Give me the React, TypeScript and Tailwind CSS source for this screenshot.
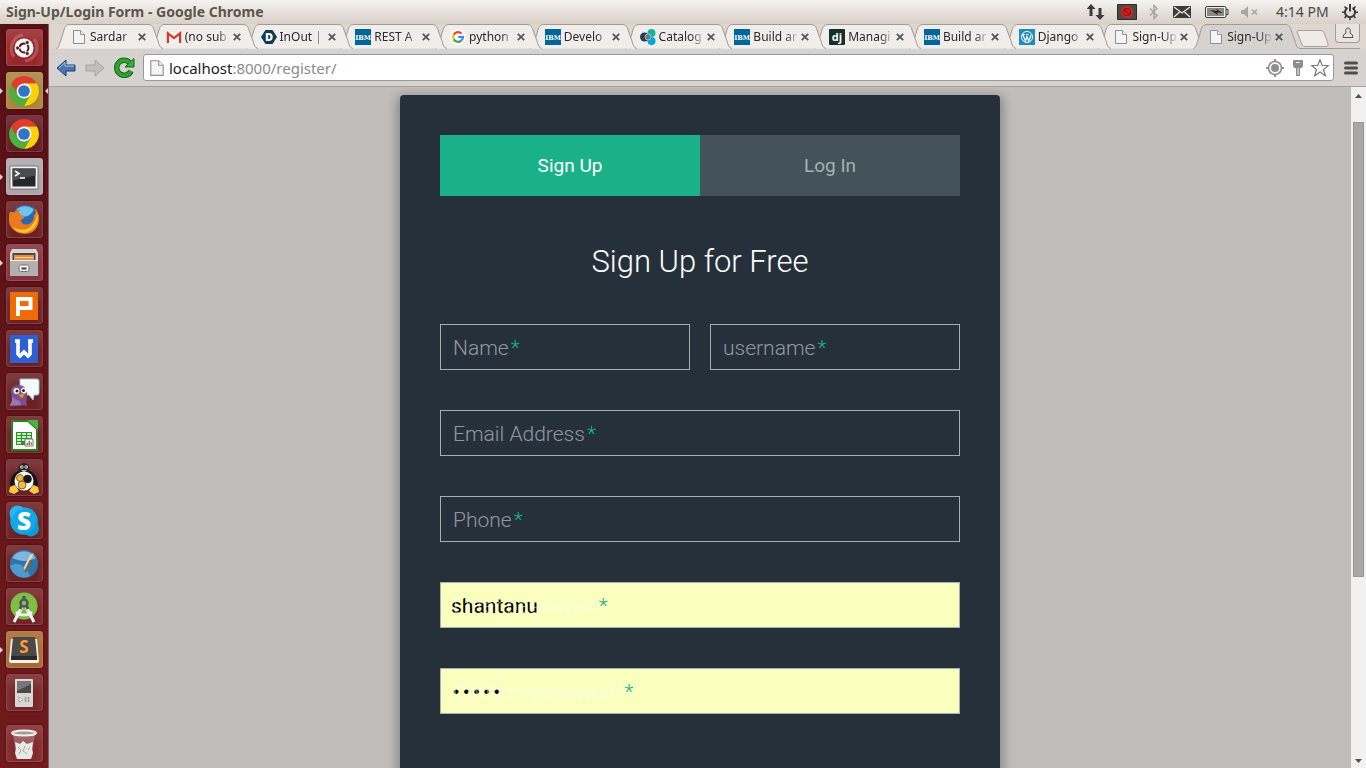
import { useState } from "react";
import type { ReactNode } from "react";

const PageIcon = ({ className = "w-4 h-4" }: { className?: string }) => (
  <svg viewBox="0 0 16 16" className={className}>
    <path d="M2.5 1.5h7l4 4v9h-11z" fill="#f4f4f4" stroke="#8f8f8f" />
    <path d="M9.5 1.5v4h4" fill="#fff" stroke="#8f8f8f" />
  </svg>
);

const GmailIcon = () => (
  <svg viewBox="0 0 16 16" className="w-4 h-4">
    <path d="M1 3h14v11H1z" fill="#f5f1f0" />
    <path d="M1.9 14V4.2L8 9.2l6.1-5V14" fill="none" stroke="#d5392e" strokeWidth="2.2" />
  </svg>
);

const DIcon = () => (
  <svg viewBox="0 0 16 16" className="w-4 h-4">
    <path d="M4.5 1h7L16 8l-4.500 7h-7L0 8z" fill="#0d3b52" />
    <text x="8" y="12" textAnchor="middle" fontFamily="Open Sans" fontWeight="800" fontSize="11" fill="#fff">D</text>
  </svg>
);

const IbmIcon = () => (
  <svg viewBox="0 0 16 16" className="w-4 h-4">
    <path d="M0 0h16v16H0z" fill="#006699" />
    <text x="8" y="10.500" textAnchor="middle" fontFamily="DejaVu Serif" fontWeight="700" fontSize="6.500" fill="#fff">IBM</text>
  </svg>
);

const GoogleIcon = () => (
  <svg viewBox="0 0 16 16" className="w-4 h-4">
    <circle cx="8" cy="8" r="8" fill="#fff" />
    <g fill="none" strokeWidth="2.2">
      <path d="M3.800 5.600a4.900 4.900 0 0 1 7.700-1.100" stroke="#ea4335" />
      <path d="M3.800 5.600a4.900 4.900 0 0 0 0 4.800" stroke="#fbbc05" />
      <path d="M3.800 10.400a4.900 4.900 0 0 0 7.500 1.200" stroke="#34a853" />
      <path d="M8.200 8H13a4.900 4.900 0 0 1-1.700 3.600" stroke="#4285f4" />
    </g>
  </svg>
);

const BluemixIcon = () => (
  <svg viewBox="0 0 16 16" className="w-4 h-4">
    <circle cx="11.500" cy="4" r="4" fill="#12b5a0" />
    <circle cx="11.500" cy="12" r="4" fill="#00a8d8" />
    <circle cx="4.500" cy="8" r="4.500" fill="#2b3f51" />
    <circle cx="8" cy="8" r="3" fill="#5f7f8d" stroke="#b9cdd3" strokeWidth=".8" />
  </svg>
);

const DjangoIcon = () => (
  <svg viewBox="0 0 16 16" className="w-4 h-4">
    <rect width="16" height="16" rx="1" fill="#113228" />
    <text x="8" y="11.500" textAnchor="middle" fontFamily="Open Sans" fontWeight="700" fontSize="11" fill="#fff">dj</text>
  </svg>
);

const WordpressIcon = () => (
  <svg viewBox="0 0 16 16" className="w-4 h-4">
    <path d="M0 0h16v16H0z" fill="#1e8cbe" />
    <circle cx="8" cy="8" r="5.500" fill="none" stroke="#fff" />
    <path d="M3.800 5.500L6.500 12 8 7.500 9.800 12l2.200-6M3 5.500h3M7 5.500h2.500" fill="none" stroke="#fff" strokeWidth="1.200" />
  </svg>
);

const tabs: { title: string; icon: ReactNode }[] = [
  { title: "Sardar", icon: <PageIcon /> },
  { title: "(no sub", icon: <GmailIcon /> },
  { title: "InOut |", icon: <DIcon /> },
  { title: "REST A", icon: <IbmIcon /> },
  { title: "python", icon: <GoogleIcon /> },
  { title: "Develo", icon: <IbmIcon /> },
  { title: "Catalog", icon: <BluemixIcon /> },
  { title: "Build ar", icon: <IbmIcon /> },
  { title: "Managi", icon: <DjangoIcon /> },
  { title: "Build ar", icon: <IbmIcon /> },
  { title: "Django", icon: <WordpressIcon /> },
  { title: "Sign-Up", icon: <PageIcon /> },
  { title: "Sign-Up", icon: <PageIcon /> },
];

const ChromeLogo = () => (
  <svg viewBox="1 1 30 30" className="w-8 h-8">
    <path d="M16 9h12.120A14 14 0 0 0 3.880 9L9.940 19.500z" fill="#e23b30" />
    <path d="M16 9h12.120A14 14 0 0 1 16 30l6.060-10.500z" fill="#fbd20a" />
    <path d="M9.940 19.500L3.880 9A14 14 0 0 0 16 30l6.060-10.500z" fill="#4caf3f" />
    <circle cx="16" cy="16" r="7" fill="#fff" />
    <circle cx="16" cy="16" r="5.500" fill="#2f76c4" />
  </svg>
);

const UbuntuLogo = () => (
  <svg viewBox="0 0 32 32" className="w-8 h-8">
    <path d="M4 20A13 13 0 0 1 15 3M28 12a13 13 0 0 1-11 17M6 25a13 13 0 0 1 0-16M26 7a13 13 0 0 1 0 17" fill="none" stroke="#e79a96" strokeOpacity=".35" strokeWidth="3" />
    <circle cx="16" cy="16" r="9.500" fill="#fff" />
    <circle cx="16" cy="16" r="4.500" fill="none" stroke="#5d1318" strokeWidth="2" strokeDasharray="7.800 1.620" strokeDashoffset="3.900" />
    <g fill="#5d1318" stroke="#fff" strokeWidth=".6">
      <circle cx="9.600" cy="16" r="1.900" />
      <circle cx="19.200" cy="10.500" r="1.900" />
      <circle cx="19.200" cy="21.500" r="1.900" />
    </g>
  </svg>
);

const TerminalLogo = () => (
  <svg viewBox="0 0 32 32" className="w-8 h-8">
    <rect x="2" y="5" width="28" height="23" rx="1" fill="#f4f4f4" stroke="#77747a" />
    <rect x="4.500" y="7.500" width="23" height="18" fill="#252827" />
    <path d="M4.500 7.500h23v7l-23 5z" fill="#4a4d4c" />
    <path d="M7 10l4 2.500L7 15M12 17h5" fill="none" stroke="#fff" strokeWidth="1.500" />
  </svg>
);

const FirefoxLogo = () => (
  <svg viewBox="1 1 30 30" className="w-8 h-8">
    <circle cx="17" cy="15" r="13" fill="#2a68b4" />
    <path d="M9 6c4-4 12-4 16 0-1 4-5 7-9 7-4-1-6-4-7-7z" fill="#6cc6ee" />
    <path d="M3 8c1 1 2 0 4 1 2-2 4-3 6-3-2 2-2 3-1 5l4 1c1 1 0 3-3 4 0 3 3 5 7 4 4-1 6-5 5-9 2 2 3-4 0-7 4 3 6 8 5 13-1 8-7 13-15 12C6 28 1 21 2 14c0-2 0-4 1-6z" fill="#ec7a1c" />
    <path d="M28 9c3 9-2 18-12 19-5 0-9-3-11-6 6 4 13 4 17 0 4-3 6-8 6-13z" fill="#fbc62d" />
  </svg>
);

const FilesLogo = () => (
  <svg viewBox="0 0 32 32" className="w-8 h-8">
    <path d="M4 2h24l2 4v23H2V6z" fill="#d5d5d3" />
    <path d="M4.500 6h23v7h-23z" fill="#4b4745" />
    <path d="M6 8h20v6H6z" fill="#f08a3e" />
    <path d="M7 10h18v1H7z" fill="#ffd9b8" />
    <path d="M2 13h28v16H2z" fill="#b1b1af" />
    <path d="M2 13h28v1H2z" fill="#efefed" />
    <rect x="11" y="18" width="10" height="6.500" rx="1.500" fill="#eee" stroke="#777" />
    <path d="M13.500 20.500h5v2h-5z" fill="#444" />
  </svg>
);

const PresentationLogo = () => (
  <svg viewBox="0 0 32 32" className="w-8 h-8">
    <path d="M2 2h28v28H2z" fill="#ee6b08" />
    <path d="M10 26V9h12.500v9H12" fill="none" stroke="#fff" strokeWidth="4" />
  </svg>
);

const WriterLogo = () => (
  <svg viewBox="0 0 32 32" className="w-8 h-8">
    <path d="M2 2h28v28H2z" fill="#2f5fd4" />
    <path d="M7 8h5M20 8h5M10 8v13l2 2 4-4 4 4 2-2V8" fill="none" stroke="#fff" strokeWidth="3.600" />
  </svg>
);

const PidginLogo = () => (
  <svg viewBox="0 0 32 32" className="w-8 h-8">
    <path d="M12 3h17a2 2 0 0 1 2 2v12a2 2 0 0 1-2 2h-3l-1 5-4-5h-9z" fill="#f5fafd" stroke="#9cc3de" />
    <path d="M3 14c0-6 15-7 16 1 1 6-2 8 0 15-5-2-10 1-18 0 5-6 2-9 2-16z" fill="#79518f" />
    <path d="M4 20c4 6 8 2 9 9-4 0-7 1-11 0 3-4 2-6 2-9z" fill="#9c74b3" />
    <circle cx="8.500" cy="15" r="3" fill="#fff" />
    <circle cx="16" cy="14.500" r="3" fill="#fff" />
    <circle cx="9" cy="15" r="1.500" fill="#222" />
    <circle cx="15.500" cy="14.500" r="1.500" fill="#222" />
    <path d="M10 18.500l7-1-3 5z" fill="#f08a1e" />
  </svg>
);

const CalcLogo = () => (
  <svg viewBox="0 0 32 32" className="w-8 h-8">
    <path d="M4 2h16l9 8v21H4z" fill="#fff" stroke="#23851f" strokeWidth="2" />
    <path d="M19 1h11v10z" fill="#49b53f" />
    <path d="M8 13h16v13H8z" fill="#2d8f27" />
    <path d="M9 14h4v2H9zM14 14h4v2h-4zM19 14h4v2h-4zM9 17h4v2H9zM14 17h4v2h-4zM19 17h4v2h-4zM9 20h4v2H9zM14 20h4v2h-4zM9 23h4v2H9z" fill="#c6edbf" />
    <path d="M17 20h8v7h-8z" fill="#fff" stroke="#777" />
    <path d="M18.500 24h1.500v2h-1.500z" fill="#e43" />
    <path d="M20.500 22h1.500v4h-1.500z" fill="#38c" />
    <path d="M22.500 23h1.500v3h-1.500z" fill="#e80" />
  </svg>
);

const PenguinLogo = () => (
  <svg viewBox="0 0 32 32" className="w-8 h-8">
    <path d="M16 8c9 0 14 6 14 16l-5-2v6H7v-6l-5 2C2 14 7 8 16 8z" fill="#161616" />
    <circle cx="16" cy="6.500" r="5.500" fill="#222" />
    <circle cx="16" cy="19" r="9.500" fill="#fff" />
    <circle cx="13.800" cy="5" r="1.800" fill="#ddd" />
    <circle cx="18.200" cy="5" r="1.800" fill="#ddd" />
    <circle cx="14" cy="5" r=".8" fill="#222" />
    <circle cx="18" cy="5" r=".8" fill="#222" />
    <path d="M13 8h6l-3 2.500z" fill="#b9bcc0" />
    <g stroke="#222" strokeWidth=".6">
      <circle cx="12" cy="16" r="3.500" fill="#f4bd36" />
      <circle cx="19.500" cy="17" r="4" fill="#161616" />
      <circle cx="14" cy="23" r="4" fill="#f4bd36" />
    </g>
    <path d="M2 25l5-2 4 6-5 3-5-2zM30 25l-5-2-4 6 5 3 5-2z" fill="#f8c945" />
  </svg>
);

const SkypeLogo = () => (
  <svg viewBox="1 1 30 30" className="w-8 h-8">
    <circle cx="16" cy="16" r="13" fill="#0fa5e3" />
    <circle cx="10" cy="9" r="7.500" fill="#29b5ee" />
    <circle cx="22.500" cy="23" r="7.500" fill="#0c9bd8" />
    <circle cx="16" cy="16" r="11" fill="#14a8e6" />
    <text x="16" y="24" textAnchor="middle" fontFamily="Open Sans" fontWeight="800" fontSize="23" fill="#fff">S</text>
  </svg>
);

const FeatherLogo = () => (
  <svg viewBox="0 0 32 32" className="w-8 h-8">
    <circle cx="16" cy="16" r="14" fill="#2c76ad" />
    <path d="M4 10a14 14 0 0 1 24 0c-8 4-14 4-24 0z" fill="#7fb6dc" />
    <path d="M2 18c8-5 16 0 20 10A14 14 0 0 1 2 18z" fill="#4c9bd0" />
    <path d="M17 24L26 5l-4 2-6 12z" fill="#e3d7bb" />
    <path d="M17 24l6-12" stroke="#805a2c" strokeWidth="2" />
  </svg>
);

const AndroidStudioLogo = () => (
  <svg viewBox="0 0 32 32" className="w-8 h-8">
    <circle cx="16" cy="15" r="13.500" fill="#7fbf45" />
    <path d="M8 21a12 12 0 0 0 16 0" fill="none" stroke="#f4f4f4" strokeWidth="2.500" />
    <path d="M14.500 15L6 31M17.500 15L26 31" stroke="#f4f4f4" strokeWidth="3" />
    <path d="M16 5v5M12 18l2-4M20 18l-2-4" stroke="#4f5752" strokeWidth="3" />
    <circle cx="16" cy="12" r="3.500" fill="#8fb36c" stroke="#4f5752" strokeWidth="2.500" />
  </svg>
);

const SublimeLogo = () => (
  <svg viewBox="0 0 32 32" className="w-8 h-8">
    <path d="M3 5h26l2 22a2 2 0 0 1-2 2H3a2 2 0 0 1-2-2z" fill="#f2f2f0" />
    <path d="M5 3h22l2 20H3z" fill="#4a4948" />
    <path d="M3 22h26v4H3z" fill="#2b2a2a" />
    <text x="16" y="19" textAnchor="middle" fontFamily="Open Sans" fontWeight="700" fontSize="17" fill="#ff9c33">S</text>
  </svg>
);

const PlayerLogo = () => (
  <svg viewBox="0 0 32 32" className="w-8 h-8">
    <rect x="7" y="2" width="18" height="28" rx="1" fill="#d8d5d5" />
    <path d="M9 4h14v12H9z" fill="#4b484a" />
    <path d="M9 4h14v3L9 14z" fill="#77757a" />
    <path d="M11 20v5l4-2.500z" fill="#fff" stroke="#a7a3a3" />
    <path d="M17.500 20v5M20.500 20v5" stroke="#a19d9d" strokeWidth="1.500" />
  </svg>
);

const TrashLogo = () => (
  <svg viewBox="0 0 32 32" className="w-8 h-8">
    <path d="M5 5l3 24h16l3-24z" fill="#cfc9c9" fillOpacity=".35" />
    <path d="M7 14l5 2 3-3 4 3 6-2-1 7 1 4-2 6H9l-2-6 1-4z" fill="#e8e8e6" />
    <path d="M10 19l3 3-2 4M17 18l-2 5 4 3M22 19l-2 3" stroke="#a9a7a5" fill="none" />
    <ellipse cx="16" cy="5" rx="12" ry="2.500" fill="#a49a9a" stroke="#f1f1ef" strokeWidth="2" />
  </svg>
);

const launcher: { name: string; tile: string; logo: ReactNode; open?: boolean; focused?: boolean }[] = [
  { name: "Dash", tile: "bg-[#96272c]", logo: <UbuntuLogo /> },
  { name: "Google Chrome", tile: "bg-[#a9853c]", logo: <ChromeLogo />, open: true, focused: true },
  { name: "Chrome Apps", tile: "bg-[#651a22]", logo: <ChromeLogo /> },
  { name: "Terminal", tile: "bg-[#aaa5a9]", logo: <TerminalLogo />, open: true },
  { name: "Firefox", tile: "bg-[#6c2023]", logo: <FirefoxLogo /> },
  { name: "Files", tile: "bg-[#86303b]", logo: <FilesLogo />, open: true },
  { name: "Presentation", tile: "bg-[#6c2023]", logo: <PresentationLogo /> },
  { name: "Writer", tile: "bg-[#6c2023]", logo: <WriterLogo /> },
  { name: "Pidgin", tile: "bg-[#6c2023]", logo: <PidginLogo /> },
  { name: "Calc", tile: "bg-[#6c2023]", logo: <CalcLogo /> },
  { name: "Penguin", tile: "bg-[#6c2023]", logo: <PenguinLogo /> },
  { name: "Skype", tile: "bg-[#6c2023]", logo: <SkypeLogo /> },
  { name: "Feather", tile: "bg-[#6c2023]", logo: <FeatherLogo /> },
  { name: "Android Studio", tile: "bg-[#752427]", logo: <AndroidStudioLogo /> },
  { name: "Sublime Text", tile: "bg-[#a8692e]", logo: <SublimeLogo />, open: true },
  { name: "Media Player", tile: "bg-[#782528]", logo: <PlayerLogo /> },
];

const TopBar = () => (
  <header className="flex h-6 shrink-0 items-center justify-between bg-linear-to-b from-[#f6f4f1] to-[#d9cfc6] pl-[6px] pr-2 text-[#5c564e]">
    <h1 className="text-[14px] font-bold leading-[22px]">Sign-Up/Login Form - Google Chrome</h1>
    <div className="flex items-center text-[#3c3b37]">
      <svg viewBox="0 0 18 16" className="h-4 w-[18px]" fill="currentColor">
        <path d="M4 0l4.500 5h-3v7h-3V5h-3zM13 16l-4.500-5h3V4h3v7h3z" />
      </svg>
      <svg viewBox="0 0 20 16" className="ml-3 h-4 w-5">
        <path d="M.5.500h19v15H.5z" fill="#4b4a48" stroke="#2d2c2a" />
        <circle cx="10" cy="8" r="6" fill="#d62222" />
        <circle cx="10" cy="8" r="3.500" fill="none" stroke="#8d1414" strokeWidth="1.200" />
        <path d="M7.500 5.500l5 5" stroke="#8d1414" strokeWidth="1.200" />
      </svg>
      <svg viewBox="0 0 10 16" className="ml-3 h-4 w-[10px]" fill="none" stroke="#a9a49e" strokeWidth="1.400">
        <path d="M1 4.500l7 7-3 3v-13l3 3-7 7" />
      </svg>
      <svg viewBox="0 0 18 12" className="ml-[14px] h-3 w-[18px]">
        <path d="M0 0h18v12H0z" fill="currentColor" />
        <path d="M1 1l8 6 8-6M1 11l5.500-5M17 11l-5.500-5" fill="none" stroke="#ece8e3" strokeWidth="1.300" />
      </svg>
      <svg viewBox="0 0 24 12" className="ml-[14px] h-3 w-6">
        <rect x=".5" y=".5" width="20.500" height="11" rx="1.500" fill="#eee" stroke="#3c3b37" />
        <path d="M2 2h17v8H2z" fill="#8a8883" />
        <path d="M21 3.500h2v5h-2" fill="none" stroke="#3c3b37" />
        <path d="M5 4l7 1-1-2 7 4-6-.5 1 2.500z" fill="#2b2a28" />
      </svg>
      <svg viewBox="0 0 18 12" className="ml-3 h-3 w-[18px]" fill="#aaa59f">
        <path d="M0 4h3l4-4v12L3 8H0z" />
        <path d="M11 3.500l5 5M16 3.500l-5 5" stroke="#aaa59f" strokeWidth="1.500" />
      </svg>
      <time className="ml-[17px] w-[54px] whitespace-nowrap text-[14px] leading-[22px] text-[#4c4a45]">4:14 PM</time>
      <svg viewBox="0 0 16 16" className="ml-3 h-4 w-4" fill="none" stroke="currentColor">
        <path d="M5.500 3.800a5 5 0 1 0 5 0" strokeWidth="2" />
        <path d="M8 0v7.500" strokeWidth="2" />
        <path d="M2.500 2.500l2 2M13.500 2.500l-2 2M0 8.300h3M16 8.300h-3M2.500 14l2-2M13.500 14l-2-2M8 16v-3" strokeWidth="1.600" />
      </svg>
    </div>
  </header>
);

const Launcher = () => (
  <nav className="flex w-[49px] shrink-0 flex-col gap-[6px] border-r border-[#8a5a62] bg-linear-to-b from-[#560f15] to-[#701a1d] pt-[5px]">
    {launcher.map((app) => (
      <div key={app.name} className="relative flex justify-center">
        {app.open && (
          <span className="absolute left-0 top-4 border-y-3 border-l-3 border-y-transparent border-l-[#d9d3d3]" />
        )}
        <button
          aria-label={app.name}
          className={`flex h-[37px] w-[37px] items-center justify-center rounded-[3px] border border-white/15 shadow-[0_0_2px_#2b0508,inset_0_10px_8px_rgba(255,255,255,0.12)] ${app.tile}`}
        >
          {app.logo}
        </button>
        {app.focused && (
          <span className="absolute right-0 top-4 border-y-3 border-r-3 border-y-transparent border-r-[#d9d3d3]" />
        )}
      </div>
    ))}
    <div className="mt-2 flex justify-center">
      <button
        aria-label="Trash"
        className="flex h-[37px] w-[37px] items-center justify-center rounded-[3px] border border-white/15 bg-[#82282b] shadow-[0_0_2px_#2b0508,inset_0_10px_8px_rgba(255,255,255,0.12)]"
      >
        <TrashLogo />
      </button>
    </div>
  </nav>
);

const TabStrip = () => {
  const [active, setActive] = useState(12);

  return (
    <div className="flex h-[25px] bg-[#ded6cf] pl-[7px] pr-[6px]">
      <div className="flex min-w-0 flex-1" role="tablist">
        {tabs.map((tab, i) => (
          <div
            key={i}
            className="relative flex min-w-0 flex-1 items-center pl-[15px]"
            style={{ zIndex: i === active ? 30 : 20 - i }}
          >
            <svg
              viewBox="0 0 107 25"
              preserveAspectRatio="none"
              className="absolute left-0 top-0 h-[25px] w-[107px]"
            >
              <path
                d="M0 24.500C3 24 3 21 5 16L8 6C9 2 11 .5 14 .5H92C95 .5 97 2 98 6L102 17C103 21 104 24 107 24.500"
                fill={i === active ? "#d6d2d0" : "#f0edea"}
                stroke="#a19b96"
              />
              {i === active && <path d="M1 24h105v1H1z" fill="#d6d2d0" />}
            </svg>
            <button
              role="tab"
              aria-selected={i === active}
              onClick={() => setActive(i)}
              className="relative flex items-center gap-[3px] text-[12px] text-[#2b2b2b]"
            >
              {tab.icon}
              <span className="w-[46px] whitespace-nowrap text-left [mask-image:linear-gradient(to_right,black_32px,transparent_46px)]">
                {tab.title}
              </span>
            </button>
            <button aria-label="Close tab" className="relative ml-[2px]">
              <svg viewBox="0 0 8 8" className="h-2 w-2">
                <path d="M.8.8l6.400 6.400M7.200.8L.8 7.200" stroke="#555" strokeWidth="1.800" />
              </svg>
            </button>
          </div>
        ))}
      </div>
      <div className="flex w-[72px] shrink-0 justify-between border-b border-[#a19b96] pl-2">
        <button aria-label="New tab" className="pt-1">
          <svg viewBox="0 0 33 17" className="h-[17px] w-[33px]">
            <path d="M1 2Q1 .5 3 .5h22q2 0 3 2l4 11q1 3-2 3H9q-2 0-3-2z" fill="#eeebe8" stroke="#a8a19b" />
          </svg>
        </button>
        <button aria-label="Profile" className="flex h-[19px] w-[25px] items-center justify-center rounded-b border border-t-0 border-[#a39c95] bg-[#e9e4df]">
          <svg viewBox="0 0 12 12" className="h-3 w-3" fill="none" stroke="#555">
            <path d="M4 6Q3 1 6 1t2 5q3 1 3 4.500H1Q1 7 4 6z" />
          </svg>
        </button>
      </div>
    </div>
  );
};

const Toolbar = () => (
  <div className="flex h-[38px] items-center border-b border-[#a5a19f] bg-[#d6d2d0] pl-[7px] pr-2">
    <button aria-label="Back">
      <svg viewBox="0 0 20 18" className="h-[18px] w-5">
        <path d="M1 9l9-8v5h9v6h-9v5z" fill="#4a74b4" stroke="#1f3d73" strokeLinejoin="round" />
        <path d="M3 9l6-5.500V7h9" fill="none" stroke="#a9c4ea" />
      </svg>
    </button>
    <button aria-label="Forward" className="ml-[9px]">
      <svg viewBox="0 0 20 18" className="h-[18px] w-5">
        <path d="M19 9l-9-8v5H1v6h9v5z" fill="#c1bfbe" stroke="#a5a2a0" strokeLinejoin="round" />
      </svg>
    </button>
    <button aria-label="Reload" className="ml-2">
      <svg viewBox="0 0 22 22" className="h-[22px] w-[22px]">
        <path d="M16.500 5.500A7.500 7.500 0 1 0 18 14" fill="none" stroke="#14661a" strokeWidth="5.500" />
        <path d="M12 10h9V1.500z" fill="#35b135" stroke="#14661a" />
        <path d="M16.500 5.500A7.500 7.500 0 1 0 18 14" fill="none" stroke="#2fa32f" strokeWidth="3.500" />
      </svg>
    </button>
    <div className="ml-2 flex h-[27px] min-w-0 flex-1 items-center rounded-[3px] border border-[#9b9896] bg-white pl-1 pr-[3px]">
      <PageIcon className="h-[18px] w-[18px]" />
      <a href="#" className="ml-[3px] flex-1 text-[15px] leading-[20px] text-[#8a8a8a]">
        <span className="text-[#1c1c1c]">localhost</span>:8000/register/
      </a>
      <svg viewBox="0 0 18 18" className="h-[18px] w-[18px]">
        <circle cx="9" cy="9" r="6.500" fill="none" stroke="#8e8e8e" strokeWidth="1.600" />
        <circle cx="9" cy="9" r="4" fill="#8e8e8e" />
        <path d="M9 0v3M9 15v3M0 9h3M15 9h3" stroke="#8e8e8e" strokeWidth="2" />
      </svg>
      <svg viewBox="0 0 12 16" className="ml-2 h-4 w-3">
        <path d="M2 0h8q1 0 1 1v5q0 2-2 2H8v8H4V8H3Q1 8 1 6V1q0-1 1-1z" fill="#8e8e8e" />
        <path d="M4 2.500h4M6 8v7" stroke="#eee" />
      </svg>
      <svg viewBox="0 0 20 20" className="ml-[6px] h-5 w-5">
        <path d="M10 1.500l2.200 6h6.300l-5 4 2 6.500L10 14l-5.500 4 2-6.500-5-4h6.300z" fill="#fff" stroke="#7c7c7c" strokeWidth="1.200" strokeLinejoin="round" />
      </svg>
    </div>
    <button aria-label="Menu" className="ml-[10px]">
      <svg viewBox="0 0 14 14" className="h-[14px] w-[14px]">
        <path d="M1.500 2h11M1.500 7h11M1.500 12h11" stroke="#4f4f4f" strokeWidth="3" strokeLinecap="round" />
      </svg>
    </button>
  </div>
);

type FieldProps = {
  id: string;
  label: string;
  type?: string;
  defaultValue?: string;
};

const Field = ({ id, label, type = "text", defaultValue }: FieldProps) => (
  <div className="relative min-w-0 flex-1">
    <label
      htmlFor={id}
      className="pointer-events-none absolute left-[13px] top-0 text-[21px] leading-[48px] text-white/50"
    >
      {label}
      <span className="ml-[2px] text-[#1ab188]">*</span>
    </label>
    <input
      id={id}
      type={type}
      defaultValue={defaultValue}
      className={`h-[46px] w-full border border-[#a0b3b0] px-[10px] pt-[2px] font-normal outline-none focus:border-[#1ab188] ${
        defaultValue ? "bg-[#faffbd] text-black" : "bg-transparent text-white"
      } ${type === "password" ? "font-['Liberation_Mono',monospace] text-[17px]" : "text-[21px]"}`}
    />
  </div>
);

const RegisterForm = () => {
  const [mode, setMode] = useState("signup");
  const on = "bg-[#1ab188] text-white";
  const off = "bg-[#435359] text-[#a0b3b0]";

  return (
    <main className="mx-auto mt-2 w-full max-w-[600px] flex-1 rounded-t bg-[#25303b] p-10 font-['Roboto',sans-serif] font-light shadow-[0_4px_10px_4px_rgba(19,35,47,0.3)]">
      <div className="mb-10 grid grid-cols-2 text-[19px] font-normal">
        <button onClick={() => setMode("signup")} className={`h-[61px] pt-[2px] ${mode === "signup" ? on : off}`}>
          Sign Up
        </button>
        <button onClick={() => setMode("login")} className={`h-[61px] pt-[2px] ${mode === "login" ? on : off}`}>
          Log In
        </button>
      </div>
      <h2 className="mb-9 text-center text-[31px] leading-[52px] text-white">Sign Up for Free</h2>
      <form className="flex flex-col gap-10">
        <div className="flex gap-5">
          <Field id="name" label="Name" />
          <Field id="username" label="username" />
        </div>
        <Field id="email" label="Email Address" type="email" />
        <Field id="phone" label="Phone" />
        <Field id="password" label="Enter password" defaultValue="shantanu" />
        <Field id="confirm" label="Confirm password" type="password" defaultValue="admin" />
      </form>
    </main>
  );
};

const Scrollbar = () => (
  <div className="flex w-[15px] shrink-0 flex-col items-center bg-[#f1f1f1]">
    <svg viewBox="0 0 7 4" className="my-[7px] h-1 w-[7px]">
      <path d="M0 4h7L3.500 0z" fill="#505050" />
    </svg>
    <div className="flex w-[11px] flex-1 flex-col pt-[17px]">
      <div className="h-[72%] border border-[#989898] bg-[#a8a8a8]" />
    </div>
    <svg viewBox="0 0 7 4" className="my-[5px] h-1 w-[7px]">
      <path d="M0 0h7L3.500 4z" fill="#505050" />
    </svg>
  </div>
);

const App = () => {
  return (
    <div className="flex h-screen flex-col overflow-hidden font-['Noto_Sans',sans-serif]">
      <TopBar />
      <div className="flex min-h-0 flex-1">
        <Launcher />
        <div className="flex min-w-0 flex-1 flex-col">
          <TabStrip />
          <Toolbar />
          <div className="flex min-h-0 flex-1 bg-[#c1bdba]">
            <div className="flex min-w-0 flex-1 flex-col overflow-hidden">
              <RegisterForm />
            </div>
            <Scrollbar />
          </div>
        </div>
      </div>
    </div>
  );
};

export default App;
